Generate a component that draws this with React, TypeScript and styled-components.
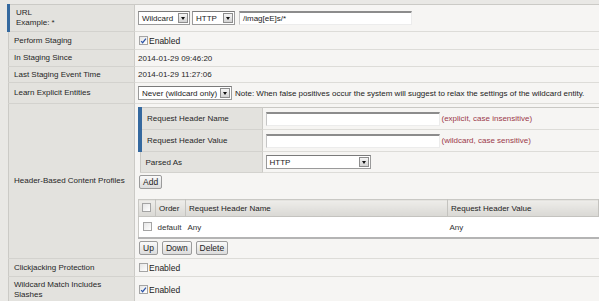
import { FC } from 'react'
import styled, { createGlobalStyle } from 'styled-components'

const ACCENT = '#35699f'
const LABEL_BG = '#e3e2de'
const VALUE_BG = '#f6f5f3'
const ROW_LINE = '#dddcd8'
const NOTE_RED = '#9c3a4a'

const GlobalStyles = createGlobalStyle`
  html, body {
    margin: 0;
    background: #e9e8e5;
  }
  body {
    padding: 4px 0 0 7px;
    font-family: "Liberation Sans", Arial, sans-serif;
    font-size: 8px;
    color: #262626;
    overflow: hidden;
  }
`

const FormTable = styled.table`
  border-collapse: collapse;
  width: 592px;
  border-top: 1px solid #cbcac6;
  border-left: 1px solid #cbcac6;
`

const Row = styled.tr<{ $h: number }>`
  height: ${(p) => p.$h}px;
`

const LabelCell = styled.td<{ $accent?: boolean }>`
  width: 126px;
  box-sizing: border-box;
  background: ${LABEL_BG};
  border-bottom: 1px solid #d3d2ce;
  border-right: 1px solid #cbcac6;
  border-left: ${(p) => (p.$accent ? `3px solid ${ACCENT}` : 'none')};
  padding: 0 6px 0 ${(p) => (p.$accent ? 6 : 5)}px;
  line-height: 10px;
  vertical-align: middle;
`

const ValueCell = styled.td<{ $pad?: string }>`
  background: ${VALUE_BG};
  border-bottom: 1px solid ${ROW_LINE};
  padding: ${(p) => p.$pad ?? '0 4px 0 3px'};
  vertical-align: middle;
  white-space: nowrap;
`

const Inline = styled.div<{ $gap?: number }>`
  display: flex;
  align-items: center;
  gap: ${(p) => p.$gap ?? 2}px;
`

const CheckRow = styled(Inline)`
  padding-left: 1px;
`

const SelectBox = styled.div<{ $w: number }>`
  display: inline-flex;
  align-items: center;
  justify-content: space-between;
  box-sizing: border-box;
  width: ${(p) => p.$w}px;
  height: 14px;
  background: #fff;
  border: 1px solid #9a9a9a;
  border-top-color: #7a7a7a;
  padding-left: 3px;
  font-size: 8px;
  color: #222;
`

const SelectArrow = styled.span`
  box-sizing: border-box;
  width: 10px;
  height: 10px;
  margin-right: 1px;
  border: 1px solid #8d8d8d;
  background: linear-gradient(#f5f5f5, #d3d3d3);
  display: flex;
  align-items: center;
  justify-content: center;

  &::after {
    content: '';
    border-left: 2.5px solid transparent;
    border-right: 2.5px solid transparent;
    border-top: 3px solid #111;
    margin-top: 1px;
  }
`

const TextInput = styled.div<{ $w: number }>`
  box-sizing: border-box;
  width: ${(p) => p.$w}px;
  height: 14px;
  background: #fff;
  border-top: 2px solid #8c8c8c;
  border-left: 1px solid #c6c6c6;
  border-right: 1px solid #ececec;
  border-bottom: 1px solid #ececec;
  padding: 1px 3px 0;
  font-size: 8px;
  line-height: 10px;
  color: #222;
`

const CheckBox = styled.span`
  box-sizing: border-box;
  display: inline-flex;
  align-items: center;
  justify-content: center;
  width: 9px;
  height: 9px;
  border: 1px solid #a4a4a4;
  background: linear-gradient(135deg, #e6e6e6, #ffffff);
  flex: none;
`

const CheckLabel = styled.span`
  font-size: 8.5px;
  color: #222;
`

const Button = styled.span`
  display: inline-flex;
  align-items: center;
  box-sizing: border-box;
  height: 14px;
  padding: 0 3px;
  border: 1px solid #9b9b9b;
  border-radius: 2px;
  background: linear-gradient(#fafafa, #dcdcdc);
  font-size: 8.5px;
  color: #222;
`

const Note = styled.span<{ $red?: boolean }>`
  color: ${(p) => (p.$red ? NOTE_RED : '#222')};
  font-size: 8px;
`

const InnerTable = styled.table`
  border-collapse: collapse;
  width: 100%;
  border: 1px solid #c9c8c4;
  border-right: none;
`

const InnerLabel = styled.td<{ $accent?: boolean }>`
  width: 122px;
  box-sizing: border-box;
  background: ${LABEL_BG};
  border-bottom: 1px solid #d3d2ce;
  border-right: 1px solid #cbcac6;
  border-left: ${(p) => (p.$accent ? `4px solid ${ACCENT}` : 'none')};
  padding-left: 5px;
`

const InnerValue = styled.td`
  background: ${VALUE_BG};
  border-bottom: 1px solid ${ROW_LINE};
  padding: 0 2px 0 3px;
`

const Grid = styled.table`
  border-collapse: collapse;
  width: 100%;
  margin-top: 10px;
  border: 1px solid #c9c8c4;
  border-right: none;
  border-bottom: 2px solid #b4b4b4;
`

const GridHead = styled.th<{ $w?: number }>`
  height: 17px;
  width: ${(p) => (p.$w ? `${p.$w}px` : 'auto')};
  box-sizing: border-box;
  padding: 0 3px;
  text-align: left;
  font-weight: normal;
  background: linear-gradient(#eeedea, #d9d8d4);
  border-right: 1px solid #c4c3bf;
  border-bottom: 1px solid #c4c3bf;
  font-size: 8px;
  color: #222;
`

const GridCell = styled.td`
  height: 20px;
  padding: 0 2px;
  background: #fff;
  font-size: 8px;
  color: #333;
`

const ButtonBar = styled.div`
  display: flex;
  gap: 4px;
  margin-top: 2px;
  padding-left: 1px;
`

const ProfileCell = styled.div`
  display: flex;
  flex-direction: column;
  align-items: flex-start;
`

const AddBar = styled.div`
  margin-top: 2px;
  padding-left: 1px;
`

const Check: FC<{ checked?: boolean }> = ({ checked }) => (
  <CheckBox>
    {checked && (
      <svg width="8" height="8" viewBox="0 0 8 8">
        <path d="M1.3 4.2 L3 6 L6.8 1.2" fill="none" stroke="#2d55a8" strokeWidth="1.4" />
      </svg>
    )}
  </CheckBox>
)

const Select: FC<{ w: number; value: string }> = ({ w, value }) => (
  <SelectBox $w={w}>
    <span>{value}</span>
    <SelectArrow />
  </SelectBox>
)

const profileFields = [
  { label: 'Request Header Name', hint: '(explicit, case insensitive)' },
  { label: 'Request Header Value', hint: '(wildcard, case sensitive)' },
]

export default function App() {
  return (
    <>
      <GlobalStyles />
      <FormTable>
        <tbody>
          <Row $h={27}>
            <LabelCell $accent>
              URL
              <br />
              Example: *
            </LabelCell>
            <ValueCell>
              <Inline $gap={2}>
                <Select w={52} value="Wildcard" />
                <Select w={43} value="HTTP" />
                <TextInput $w={173} style={{ marginLeft: 2 }}>
                  /imag[eE]s/*
                </TextInput>
              </Inline>
            </ValueCell>
          </Row>
          <Row $h={18}>
            <LabelCell>Perform Staging</LabelCell>
            <ValueCell>
              <CheckRow $gap={1}>
                <Check checked />
                <CheckLabel>Enabled</CheckLabel>
              </CheckRow>
            </ValueCell>
          </Row>
          <Row $h={17}>
            <LabelCell>In Staging Since</LabelCell>
            <ValueCell>2014-01-29 09:46:20</ValueCell>
          </Row>
          <Row $h={16}>
            <LabelCell>Last Staging Event Time</LabelCell>
            <ValueCell>2014-01-29 11:27:06</ValueCell>
          </Row>
          <Row $h={21}>
            <LabelCell>Learn Explicit Entities</LabelCell>
            <ValueCell>
              <Inline $gap={3}>
                <Select w={94} value="Never (wildcard only)" />
                <Note>
                  Note: When false positives occur the system will suggest to relax the settings of the
                  wildcard entity.
                </Note>
              </Inline>
            </ValueCell>
          </Row>
          <Row $h={155}>
            <LabelCell>Header-Based Content Profiles</LabelCell>
            <ValueCell $pad="3px 0 3px 3px">
              <ProfileCell>
                <InnerTable>
                  <tbody>
                    {profileFields.map((f) => (
                      <Row $h={22} key={f.label}>
                        <InnerLabel $accent>{f.label}</InnerLabel>
                        <InnerValue>
                          <Inline $gap={2}>
                            <TextInput $w={174} />
                            <Note $red>{f.hint}</Note>
                          </Inline>
                        </InnerValue>
                      </Row>
                    ))}
                    <Row $h={21}>
                      <InnerLabel>Parsed As</InnerLabel>
                      <InnerValue>
                        <Select w={105} value="HTTP" />
                      </InnerValue>
                    </Row>
                  </tbody>
                </InnerTable>
                <AddBar>
                  <Button>Add</Button>
                </AddBar>
                <Grid>
                  <thead>
                    <tr>
                      <GridHead $w={17}>
                        <Check />
                      </GridHead>
                      <GridHead $w={30}>Order</GridHead>
                      <GridHead $w={262}>Request Header Name</GridHead>
                      <GridHead>Request Header Value</GridHead>
                    </tr>
                  </thead>
                  <tbody>
                    <tr>
                      <GridCell style={{ paddingLeft: 4 }}>
                        <Check />
                      </GridCell>
                      <GridCell>default</GridCell>
                      <GridCell>Any</GridCell>
                      <GridCell>Any</GridCell>
                    </tr>
                  </tbody>
                </Grid>
                <ButtonBar>
                  <Button>Up</Button>
                  <Button>Down</Button>
                  <Button>Delete</Button>
                </ButtonBar>
              </ProfileCell>
            </ValueCell>
          </Row>
          <Row $h={18}>
            <LabelCell>Clickjacking Protection</LabelCell>
            <ValueCell>
              <CheckRow $gap={1}>
                <Check />
                <CheckLabel>Enabled</CheckLabel>
              </CheckRow>
            </ValueCell>
          </Row>
          <Row $h={26}>
            <LabelCell>
              Wildcard Match Includes
              <br />
              Slashes
            </LabelCell>
            <ValueCell>
              <CheckRow $gap={1}>
                <Check checked />
                <CheckLabel>Enabled</CheckLabel>
              </CheckRow>
            </ValueCell>
          </Row>
        </tbody>
      </FormTable>
    </>
  )
}
